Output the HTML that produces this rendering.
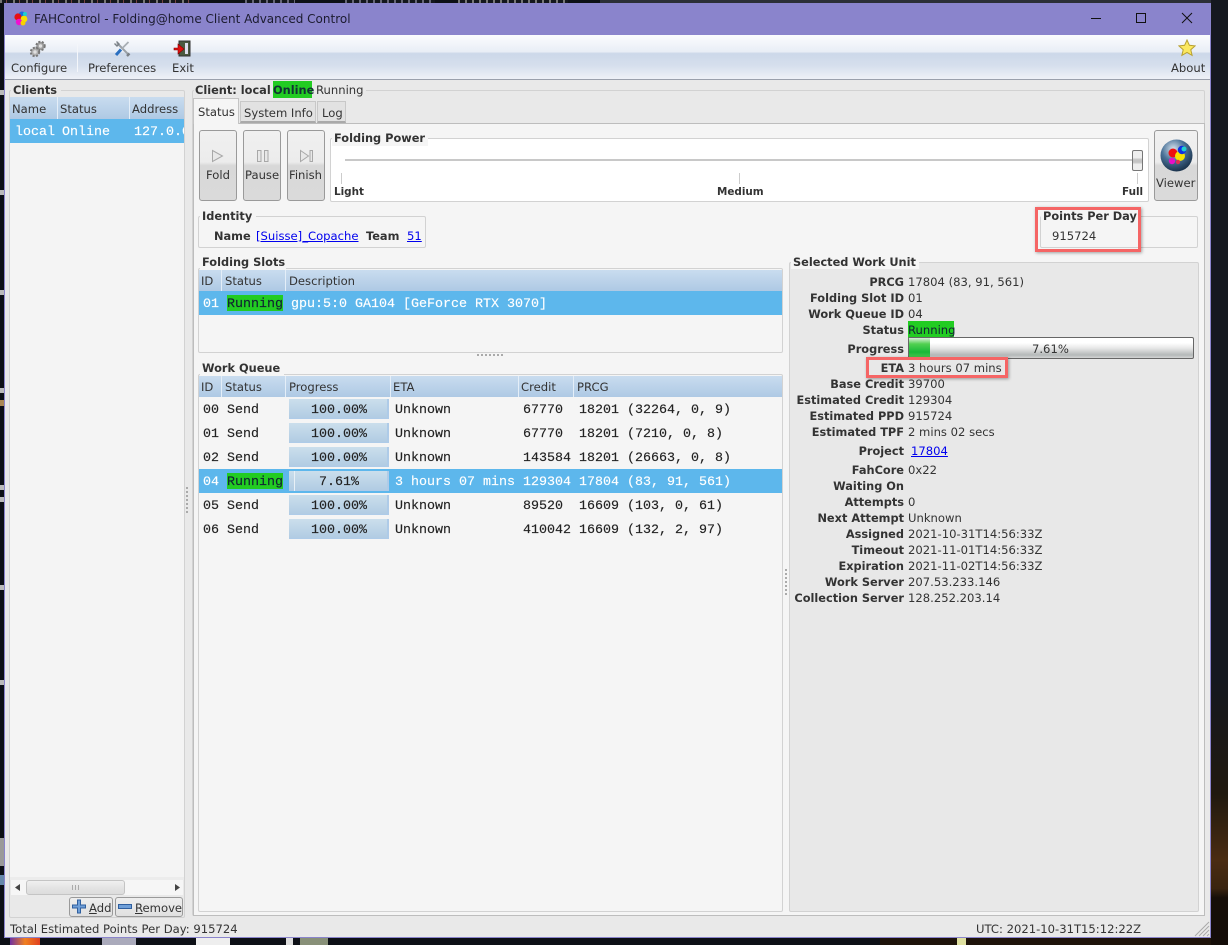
<!DOCTYPE html>
<html><head><meta charset="utf-8"><style>
html,body{margin:0;padding:0;width:1228px;height:945px;overflow:hidden;background:#0d1016}
*{box-sizing:border-box}
div,span.a,a.a{position:absolute}
.t{position:absolute;white-space:nowrap;font-family:"DejaVu Sans",sans-serif;font-size:11.6px;line-height:16px;color:#333}
.b{font-weight:bold;color:#333;font-size:11.35px}
.m{position:absolute;white-space:nowrap;font-family:"Liberation Mono",monospace;font-size:13.33px;line-height:16px;color:#222;margin-top:2px;-webkit-text-stroke:.15px}
.w{color:#fff}
.r{text-align:right}
.g{position:absolute;border:1px solid #d2d2d2;border-radius:2px}
.h{position:absolute;height:21px;background:linear-gradient(#c9dcef,#aec9e4);}
.hd{position:absolute;width:1px;background:#e4eef8;top:0;height:21px}
.btn{position:absolute;border:1px solid #9a9a9a;border-radius:3px;background:linear-gradient(#f0f0f0 0,#ececec 45%,#d8d8d8 50%,#dadada 100%)}
.pb{position:absolute;left:289px;width:100px;height:20px;background:linear-gradient(#cbdfec,#b1cce3);border-right:2px solid #aecbe8;border-bottom:1px solid #aecbe8}
.red{position:absolute;border:3px solid #f56565;box-shadow:1px 1px 3px rgba(0,0,0,.35)}
.f{position:absolute;left:0;width:4px;height:6px;background:#bbb}
a{color:#00e;text-decoration:underline}
</style></head><body>
<!-- desktop fragments -->
<div style="left:0;top:0;width:190px;height:3px;background:repeating-linear-gradient(90deg,#777 0 2px,#14171d 2px 6px,#744 6px 7px,#14171d 7px 13px)"></div>
<div style="left:245px;top:0;width:50px;height:3px;background:repeating-linear-gradient(90deg,#667 0 2px,#14171d 2px 7px)"></div>
<div style="left:345px;top:0;width:90px;height:3px;background:repeating-linear-gradient(90deg,#667 0 2px,#14171d 2px 7px)"></div>
<div style="left:458px;top:0;width:110px;height:3px;background:repeating-linear-gradient(90deg,#777 0 2px,#14171d 2px 7px)"></div>
<div style="left:600px;top:0;width:628px;height:3px;background:#2c2f37"></div>
<div style="left:1211px;top:0;width:17px;height:945px;background:linear-gradient(#15181f 0,#15181f 72%,#20190f 84%,#4a2c12 91%,#3a2410 94%,#160e08 95%,#140d08 100%)"></div>
<div class="f" style="top:90px;height:5px"></div>
<div class="f" style="top:190px;height:5px"></div>
<div class="f" style="top:290px;height:5px"></div>
<div class="f" style="top:388px;height:5px"></div>
<div class="f" style="top:400px;height:6px;background:#a85"></div>
<div class="f" style="top:485px;height:5px"></div>
<div class="f" style="top:497px;height:5px"></div>
<div class="f" style="top:585px;height:5px"></div>
<div class="f" style="top:680px;height:5px"></div>
<div style="left:0;top:838px;width:4px;height:28px;background:#9a9a9a"></div>
<div class="f" style="top:875px;height:10px;background:#68a"></div>
<div style="left:10px;top:938px;width:30px;height:7px;background:linear-gradient(90deg,#7030a0,#f08020,#e04020)"></div>
<div style="left:102px;top:938px;width:34px;height:7px;background:#aab"></div>
<div style="left:196px;top:938px;width:34px;height:7px;background:#eee"></div>
<div style="left:286px;top:938px;width:7px;height:7px;background:#ddd"></div>
<div style="left:300px;top:938px;width:28px;height:7px;background:#889078"></div>
<div style="left:880px;top:938px;width:331px;height:7px;background:#1e130a"></div>
<div style="left:957px;top:938px;width:9px;height:7px;background:#dfe0a0"></div>

<!-- window -->
<div style="left:4px;top:3px;width:1207px;height:935px;background:#e9e9e9;border:1px solid #8a84cc;border-top:0"></div>
<div style="left:4px;top:3px;width:1207px;height:32px;background:#8a84cc"></div>
<svg style="position:absolute;left:13px;top:11px" width="16" height="16"><circle cx="9" cy="4" r="3.5" fill="#1a6fe0"/><circle cx="5" cy="6" r="3.6" fill="#e81010"/><circle cx="11" cy="8" r="3.4" fill="#f5e000"/><circle cx="6" cy="11" r="3.2" fill="#f010d0"/><circle cx="12" cy="3" r="2" fill="#20d0d0"/><circle cx="10" cy="12" r="2.5" fill="#f8d000"/></svg>
<div class="t" style="left:34px;top:11px;font-size:12px;color:#1c1c30">FAHControl - Folding@home Client Advanced Control</div>
<svg style="position:absolute;left:1085px;top:8px" width="120" height="20" fill="none" stroke="#111" stroke-width="1"><path d="M6 10.5h10M51.500 5.500h9v9h-9zM97 5l10 10M107 5l-10 10"/></svg>

<!-- toolbar -->
<div style="left:5px;top:35px;width:1205px;height:45px;background:linear-gradient(#fbfcfe 0,#e9eef6 38%,#ccd8e9 42%,#d6dfed 70%,#eef1f7 100%);border-bottom:1px solid #9aa0ac"></div>
<div style="left:77px;top:44px;width:1px;height:28px;background:#f4f6fa"></div>
<svg style="position:absolute;left:29px;top:40px" width="18" height="18"><circle cx="11.500" cy="6" r="4.200" fill="#a0a0a0" stroke="#777" stroke-width="2" stroke-dasharray="2 1.500"/><circle cx="11.500" cy="6" r="1.700" fill="#e0e0e0"/><circle cx="6" cy="12" r="4.200" fill="#b0b0b0" stroke="#777" stroke-width="2" stroke-dasharray="2 1.500"/><circle cx="6" cy="12" r="1.700" fill="#e0e0e0"/></svg>
<svg style="position:absolute;left:113px;top:40px" width="18" height="18" fill="none"><path d="M4 3l11 11" stroke="#9aa0a6" stroke-width="2"/><path d="M1.500 3.500L4 6l2-2-2.500-2.500" stroke="#7a8086" stroke-width="1.400"/><path d="M16.500 13.500L14 16" stroke="#7a8086" stroke-width="2.400"/><path d="M15.500 2L9 8.500" stroke="#a8aeb4" stroke-width="1.800"/><path d="M8 9.500L3 15" stroke="#2a6fc0" stroke-width="3"/></svg>
<svg style="position:absolute;left:173px;top:40px" width="18" height="18"><rect x="6" y="1" width="11" height="15" fill="#4a5a40" stroke="#333"/><rect x="12" y="3" width="3" height="11" fill="#dde"/><path d="M1 8h4V4l6 5-6 5v-4H1z" fill="#e01010" stroke="#800"  stroke-width=".6"/></svg>
<svg style="position:absolute;left:1178px;top:39px" width="18" height="18"><path d="M9 1l2.400 5.300 5.700.6-4.300 3.800 1.300 5.700L9 13.500l-5.100 2.900 1.300-5.700L.9 6.900l5.700-.6z" fill="#fbe860" stroke="#b8a030"/></svg>
<div class="t" style="left:11px;top:60px">Configure</div>
<div class="t" style="left:88px;top:60px">Preferences</div>
<div class="t" style="left:172px;top:60px">Exit</div>
<div class="t" style="left:1171px;top:60px">About</div>

<!-- left panel -->
<div class="g" style="left:9px;top:90px;width:176px;height:828px;background:#e9e9e9"></div>
<div style="left:11px;top:81px;width:50px;height:16px;background:#e9e9e9"></div>
<div class="t b" style="left:13px;top:82px">Clients</div>
<div class="h" style="left:10px;top:97px;width:174px;height:22px"></div>
<div class="hd" style="left:57px;top:97px;height:22px"></div>
<div class="hd" style="left:129px;top:97px;height:22px"></div>
<div class="t" style="left:12px;top:101px">Name</div>
<div class="t" style="left:60px;top:101px">Status</div>
<div class="t" style="left:132px;top:101px;width:52px;overflow:hidden">Address</div>
<div style="left:10px;top:119px;width:174px;height:24px;background:#5db7ec"></div>
<div class="m w" style="left:15px;top:123px">local</div>
<div class="m w" style="left:62px;top:123px">Online</div>
<div class="m w" style="left:134px;top:123px;width:50px;overflow:hidden">127.0.0.1</div>
<div style="left:10px;top:143px;width:174px;height:734px;background:#f4f4f4"></div>
<div style="left:10px;top:877px;width:174px;height:3px;background:#ececec"></div>
<div style="left:11px;top:880px;width:172px;height:15px;background:#f6f6f6"></div>
<div style="left:26px;top:880px;width:99px;height:15px;background:linear-gradient(#f0f0f0,#e4e4e4 50%,#dcdcdc);border:1px solid #c4c4c4;border-radius:3px"></div>
<div style="left:72px;top:885px;width:7px;height:5px;background:repeating-linear-gradient(90deg,#aaa 0 1px,transparent 1px 3px)"></div>
<svg style="position:absolute;left:15px;top:883px" width="170" height="10"><path d="M0 4.500L5 1v7zM160 1l5 3.500L160 8z" fill="#444"/></svg>
<div class="btn" style="left:69px;top:897px;width:44px;height:20px;background:linear-gradient(#eee,#e0e0e0)"></div>
<div class="btn" style="left:115px;top:897px;width:68px;height:20px;background:linear-gradient(#eee,#e0e0e0)"></div>
<svg style="position:absolute;left:72px;top:899px" width="15" height="15"><path d="M5.500 1h3v5h5v3h-5v5h-3V9h-5V6h5z" fill="#6f9fd8" stroke="#2f5f9f"/></svg>
<svg style="position:absolute;left:118px;top:899px" width="15" height="15"><rect x=".5" y="5.500" width="13" height="4" fill="#6f9fd8" stroke="#2f5f9f"/></svg>
<div class="t" style="left:89px;top:900px"><u>A</u>dd</div>
<div class="t" style="left:135px;top:900px"><u>R</u>emove</div>

<!-- right panel -->
<div class="g" style="left:192px;top:90px;width:1013px;height:826px;background:#e9e9e9"></div>
<div style="left:194px;top:81px;width:172px;height:16px;background:#e9e9e9"></div>
<div class="t b" style="left:195px;top:82px">Client: local</div>
<div style="left:273px;top:81px;width:39px;height:17px;background:#22cc22"></div>
<div class="t b" style="left:273px;top:82px;color:#133">Online</div>
<div class="t" style="left:316px;top:82px">Running</div>
<!-- tabs -->
<div style="left:193px;top:123px;width:1012px;height:793px;background:#f5f5f5;border:1px solid #bdbdbd"></div>
<div style="left:193px;top:98px;width:46px;height:26px;background:#f5f5f5;border:1px solid #c4c4c4;border-bottom:0"></div>
<div style="left:240px;top:101px;width:76px;height:22px;background:#e2e2e2;border:1px solid #c8c8c8;border-bottom:2px solid #aaa"></div>
<div style="left:317px;top:101px;width:29px;height:22px;background:#e2e2e2;border:1px solid #c8c8c8;border-bottom:2px solid #aaa"></div>
<div class="t" style="left:198px;top:104px">Status</div>
<div class="t" style="left:244px;top:105px">System Info</div>
<div class="t" style="left:322px;top:105px">Log</div>

<!-- action buttons -->
<div class="btn" style="left:199px;top:130px;width:38px;height:71px"></div>
<div class="btn" style="left:243px;top:130px;width:38px;height:71px"></div>
<div class="btn" style="left:287px;top:130px;width:38px;height:71px"></div>
<div class="btn" style="left:1154px;top:130px;width:44px;height:71px"></div>
<svg style="position:absolute;left:210px;top:149px" width="16" height="14" fill="#e8e8e8" stroke="#a8a8a8"><path d="M2.500 1.500l10 5.500-10 5.500z"/></svg>
<svg style="position:absolute;left:255px;top:149px" width="16" height="14" fill="#e8e8e8" stroke="#a8a8a8"><path d="M2.500 1.500h3.500v11H2.500zM9.500 1.500H13v11H9.500z"/></svg>
<svg style="position:absolute;left:299px;top:149px" width="16" height="14" fill="#e8e8e8" stroke="#a8a8a8"><path d="M1.500 1.500l8 5.500-8 5.500zM11 1.500h2.500v11H11z"/></svg>
<div class="t" style="left:206px;top:167px">Fold</div>
<div class="t" style="left:245px;top:167px">Pause</div>
<div class="t" style="left:289px;top:167px">Finish</div>
<svg style="position:absolute;left:1160px;top:139px" width="33" height="33"><defs><radialGradient id="ball" cx=".4" cy=".3" r=".8"><stop offset="0" stop-color="#d8e4ee"/><stop offset=".45" stop-color="#4a7298"/><stop offset="1" stop-color="#0e2238"/></radialGradient></defs><circle cx="16.500" cy="16.500" r="16" fill="url(#ball)"/><circle cx="13" cy="14" r="4.500" fill="#ee1010"/><circle cx="20" cy="17" r="5" fill="#f6e400"/><circle cx="22" cy="11" r="4.200" fill="#1030e0"/><circle cx="24" cy="10" r="2.500" fill="#20d0d0"/><circle cx="12" cy="22" r="3.200" fill="#e810c8"/><circle cx="18" cy="23" r="2.200" fill="#e03050"/></svg>
<div class="t" style="left:1156px;top:175px">Viewer</div>

<!-- folding power -->
<div class="g" style="left:330px;top:138px;width:819px;height:64px;background:#fff"></div>
<div style="left:332px;top:130px;width:96px;height:16px;background:#f5f5f5"></div>
<div class="t b" style="left:334px;top:130px">Folding Power</div>
<div style="left:345px;top:159px;width:790px;height:2px;background:#c8c8c8"></div>
<div style="left:341px;top:173px;width:1px;height:11px;background:#ccc"></div>
<div style="left:739px;top:173px;width:1px;height:11px;background:#ccc"></div>
<div style="left:1137px;top:173px;width:1px;height:11px;background:#ccc"></div>
<div style="left:1132px;top:150px;width:11px;height:21px;border:1px solid #777;border-radius:2px;background:linear-gradient(#eee,#eee 35%,#c4c4c4 45%,#c4c4c4 60%,#eee 70%)"></div>
<div class="t b" style="left:334px;top:184px;font-size:10.4px">Light</div>
<div class="t b" style="left:717px;top:184px;font-size:10.4px">Medium</div>
<div class="t b" style="left:1122px;top:184px;font-size:10.4px">Full</div>

<!-- identity -->
<div class="g" style="left:198px;top:216px;width:228px;height:32px"></div>
<div style="left:200px;top:207px;width:56px;height:16px;background:#f5f5f5"></div>
<div class="t b" style="left:202px;top:208px">Identity</div>
<div class="t b" style="left:214px;top:228px">Name</div>
<div class="t" style="left:256px;top:228px"><a href="#">[Suisse]_Copache</a></div>
<div class="t b" style="left:366px;top:228px">Team</div>
<div class="t" style="left:407px;top:228px"><a href="#">51</a></div>

<!-- ppd -->
<div class="g" style="left:1040px;top:216px;width:158px;height:32px"></div>
<div style="left:1041px;top:207px;width:100px;height:16px;background:#f5f5f5"></div>
<div class="t b" style="left:1043px;top:208px">Points Per Day</div>
<div class="t" style="left:1052px;top:228px">915724</div>

<!-- folding slots -->
<div class="g" style="left:198px;top:268px;width:585px;height:85px"></div>
<div style="left:200px;top:254px;width:86px;height:16px;background:#f5f5f5"></div>
<div class="t b" style="left:202px;top:254px">Folding Slots</div>
<div class="h" style="left:199px;top:270px;width:583px"></div>
<div class="hd" style="left:221px;top:270px"></div>
<div class="hd" style="left:285px;top:270px"></div>
<div class="t" style="left:201px;top:273px">ID</div>
<div class="t" style="left:225px;top:273px">Status</div>
<div class="t" style="left:289px;top:273px">Description</div>
<div style="left:199px;top:291px;width:583px;height:24px;background:#5db7ec"></div>
<div class="m w" style="left:203px;top:295px">01</div>
<div style="left:227px;top:295px;width:56px;height:16px;background:#22cc22"></div>
<div class="m" style="left:227px;top:295px;color:#123">Running</div>
<div class="m w" style="left:291px;top:295px">gpu:5:0 GA104 [GeForce RTX 3070]</div>
<div style="left:477px;top:354px;width:26px;height:2px;background:repeating-linear-gradient(90deg,#aaa 0 2px,transparent 2px 4px)"></div>

<!-- work queue -->
<div class="g" style="left:198px;top:374px;width:585px;height:538px"></div>
<div style="left:200px;top:360px;width:84px;height:16px;background:#f5f5f5"></div>
<div class="t b" style="left:202px;top:360px">Work Queue</div>
<div class="h" style="left:199px;top:376px;width:583px"></div>
<div class="hd" style="left:221px;top:376px"></div>
<div class="hd" style="left:285px;top:376px"></div>
<div class="hd" style="left:390px;top:376px"></div>
<div class="hd" style="left:518px;top:376px"></div>
<div class="hd" style="left:573px;top:376px"></div>
<div class="t" style="left:201px;top:379px">ID</div>
<div class="t" style="left:225px;top:379px">Status</div>
<div class="t" style="left:289px;top:379px">Progress</div>
<div class="t" style="left:393px;top:379px">ETA</div>
<div class="t" style="left:521px;top:379px">Credit</div>
<div class="t" style="left:577px;top:379px">PRCG</div>

<div style="left:199px;top:469px;width:583px;height:24px;background:#5db7ec"></div>
<div class="pb" style="top:399px"></div><div class="pb" style="top:423px"></div><div class="pb" style="top:447px"></div><div class="pb" style="top:471px"></div><div class="pb" style="top:495px"></div><div class="pb" style="top:519px"></div>
<div style="left:294px;top:471px;width:1px;height:20px;background:#e8f0f6"></div>
<div class="m" style="left:203px;top:401px">00</div><div class="m" style="left:227px;top:401px">Send</div><div class="m" style="left:311px;top:401px">100.00%</div><div class="m" style="left:395px;top:401px">Unknown</div><div class="m" style="left:523px;top:401px">67770</div><div class="m" style="left:579px;top:401px">18201 (32264, 0, 9)</div>
<div class="m" style="left:203px;top:425px">01</div><div class="m" style="left:227px;top:425px">Send</div><div class="m" style="left:311px;top:425px">100.00%</div><div class="m" style="left:395px;top:425px">Unknown</div><div class="m" style="left:523px;top:425px">67770</div><div class="m" style="left:579px;top:425px">18201 (7210, 0, 8)</div>
<div class="m" style="left:203px;top:449px">02</div><div class="m" style="left:227px;top:449px">Send</div><div class="m" style="left:311px;top:449px">100.00%</div><div class="m" style="left:395px;top:449px">Unknown</div><div class="m" style="left:523px;top:449px">143584</div><div class="m" style="left:579px;top:449px">18201 (26663, 0, 8)</div>
<div class="m w" style="left:203px;top:473px">04</div><div style="left:227px;top:473px;width:56px;height:16px;background:#22cc22"></div><div class="m" style="left:227px;top:473px;color:#123">Running</div><div class="m" style="left:319px;top:473px">7.61%</div><div class="m w" style="left:395px;top:473px">3 hours 07 mins</div><div class="m w" style="left:523px;top:473px">129304</div><div class="m w" style="left:579px;top:473px">17804 (83, 91, 561)</div>
<div class="m" style="left:203px;top:497px">05</div><div class="m" style="left:227px;top:497px">Send</div><div class="m" style="left:311px;top:497px">100.00%</div><div class="m" style="left:395px;top:497px">Unknown</div><div class="m" style="left:523px;top:497px">89520</div><div class="m" style="left:579px;top:497px">16609 (103, 0, 61)</div>
<div class="m" style="left:203px;top:521px">06</div><div class="m" style="left:227px;top:521px">Send</div><div class="m" style="left:311px;top:521px">100.00%</div><div class="m" style="left:395px;top:521px">Unknown</div><div class="m" style="left:523px;top:521px">410042</div><div class="m" style="left:579px;top:521px">16609 (132, 2, 97)</div>

<!-- splitters -->
<div style="left:186px;top:487px;width:2px;height:26px;background:repeating-linear-gradient(#aaa 0 2px,transparent 2px 4px)"></div>
<div style="left:785px;top:569px;width:2px;height:26px;background:repeating-linear-gradient(#aaa 0 2px,transparent 2px 4px)"></div>

<!-- selected WU -->
<div class="g" style="left:789px;top:262px;width:410px;height:650px;background:#e8e8e8"></div>
<div style="left:791px;top:253px;width:128px;height:16px;background:#f5f5f5"></div>
<div class="t b" style="left:793px;top:254px">Selected Work Unit</div>
<div class="t b r" style="left:700px;width:204px;top:274px">PRCG</div><div class="t" style="left:908px;top:274px">17804 (83, 91, 561)</div>
<div class="t b r" style="left:700px;width:204px;top:290px">Folding Slot ID</div><div class="t" style="left:908px;top:290px">01</div>
<div class="t b r" style="left:700px;width:204px;top:306px">Work Queue ID</div><div class="t" style="left:908px;top:306px">04</div>
<div class="t b r" style="left:700px;width:204px;top:322px">Status</div><div style="left:908px;top:321px;width:46px;height:17px;background:#22cc22"></div><div class="t" style="left:908px;top:322px;color:#123">Running</div>
<div class="t b r" style="left:700px;width:204px;top:341px">Progress</div>
<div style="left:908px;top:337px;width:286px;height:22px;border:1px solid #666;border-radius:2px;background:linear-gradient(#fff 0,#fff 25%,#e8e8e8 50%,#b4b8b8 85%,#d4d4d4 100%)"></div>
<div style="left:909px;top:338px;width:21px;height:20px;background:linear-gradient(#d8f0d8 0,#50d050 30%,#18b838 70%,#50c850 100%)"></div>
<div class="t" style="left:1032px;top:341px">7.61%</div>
<div class="t b r" style="left:700px;width:204px;top:360px">ETA</div><div class="t" style="left:908px;top:360px">3 hours 07 mins</div>
<div class="t b r" style="left:700px;width:204px;top:376px">Base Credit</div><div class="t" style="left:908px;top:376px">39700</div>
<div class="t b r" style="left:700px;width:204px;top:392px">Estimated Credit</div><div class="t" style="left:908px;top:392px">129304</div>
<div class="t b r" style="left:700px;width:204px;top:408px">Estimated PPD</div><div class="t" style="left:908px;top:408px">915724</div>
<div class="t b r" style="left:700px;width:204px;top:424px">Estimated TPF</div><div class="t" style="left:908px;top:424px">2 mins 02 secs</div>
<div class="t b r" style="left:700px;width:204px;top:443px">Project</div><div class="t" style="left:911px;top:443px"><a href="#">17804</a></div>
<div class="t b r" style="left:700px;width:204px;top:462px">FahCore</div><div class="t" style="left:908px;top:462px">0x22</div>
<div class="t b r" style="left:700px;width:204px;top:478px">Waiting On</div>
<div class="t b r" style="left:700px;width:204px;top:494px">Attempts</div><div class="t" style="left:908px;top:494px">0</div>
<div class="t b r" style="left:700px;width:204px;top:510px">Next Attempt</div><div class="t" style="left:908px;top:510px">Unknown</div>
<div class="t b r" style="left:700px;width:204px;top:526px">Assigned</div><div class="t" style="left:908px;top:526px">2021-10-31T14:56:33Z</div>
<div class="t b r" style="left:700px;width:204px;top:542px">Timeout</div><div class="t" style="left:908px;top:542px">2021-11-01T14:56:33Z</div>
<div class="t b r" style="left:700px;width:204px;top:558px">Expiration</div><div class="t" style="left:908px;top:558px">2021-11-02T14:56:33Z</div>
<div class="t b r" style="left:700px;width:204px;top:574px">Work Server</div><div class="t" style="left:908px;top:574px">207.53.233.146</div>
<div class="t b r" style="left:700px;width:204px;top:590px">Collection Server</div><div class="t" style="left:908px;top:590px">128.252.203.14</div>

<!-- red highlights -->
<div class="red" style="left:1035px;top:207px;width:106px;height:45px"></div>
<div class="red" style="left:866px;top:357px;width:142px;height:21px"></div>

<!-- status -->
<div class="t" style="left:10px;top:921px">Total Estimated Points Per Day: 915724</div>
<div class="t" style="left:976px;top:921px">UTC: 2021-10-31T15:12:22Z</div>
<svg style="position:absolute;left:1194px;top:921px" width="16" height="16" stroke="#aaa" fill="none"><path d="M15 1L1 15M15 5L5 15M15 9L9 15M15 13L13 15"/></svg>
</body></html>
